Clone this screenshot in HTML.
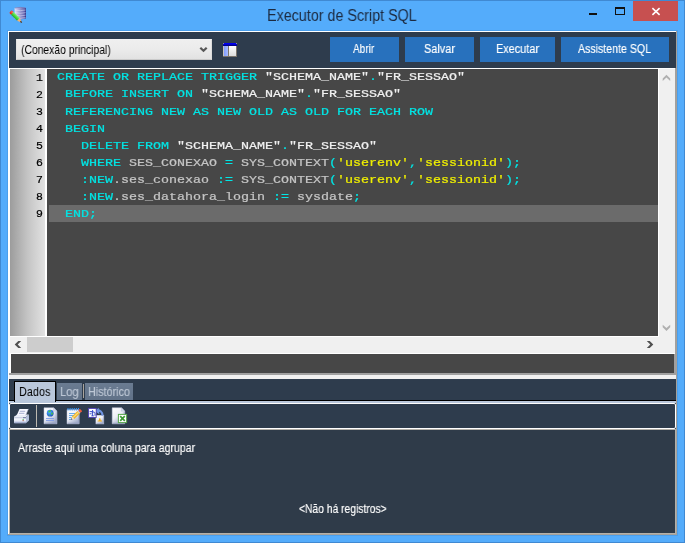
<!DOCTYPE html>
<html lang="pt-BR"><head><meta charset="utf-8"><title>Executor de Script SQL</title>
<style>
*{box-sizing:border-box;margin:0;padding:0}
html,body{width:685px;height:543px;overflow:hidden;background:#54acfb}
body{position:relative;font-family:"Liberation Sans",sans-serif}
.abs,.win div,.win span.a{position:absolute}
.win{position:absolute;left:0;top:0;width:685px;height:543px;background:#54acfb;overflow:hidden}
.edge{border:1px solid #4089d2;left:0;top:0;width:685px;height:543px}
.title{left:0;top:4px;width:685px;height:22px;line-height:22px;text-align:center;font-size:14.6px;color:#0b1626;white-space:nowrap;letter-spacing:-0.1px}
.t{white-space:nowrap;line-height:1;transform-origin:0 0;will-change:transform}
.client{left:8px;top:31px;width:669px;height:504px;background:#2e3c4d}
.combo{left:16px;top:39px;width:196px;height:21px;background:linear-gradient(#efefef,#ebebeb 50%,#e2e2e2);border:1px solid #e4e4e4;border-top-color:#f4f4f4;border-bottom-color:#cacaca;border-right-color:#dcdcdc}
.btn{top:37px;height:25px;background:#2871bd}
.ed{left:9px;top:68px;width:667px;height:306px;background:#fff}
.gut{will-change:transform;left:10px;top:69px;width:35px;height:267px;background:linear-gradient(90deg,#9c9c9c,#c4c4c4 50%,#e2e2e2)}
.code{left:47px;top:69px;width:611px;height:267px;background:#474747;overflow:hidden;will-change:transform}
.hl{left:2px;top:136px;width:609px;height:17px;background:#6b6b6b}
.ln{left:10px;height:17px;line-height:17px;white-space:pre;font-family:"Liberation Mono",monospace;font-weight:normal;font-size:13.333px;-webkit-text-stroke:0.24px currentColor;transform:translateY(-0.5px) scaleY(0.87);transform-origin:0 12px}
.num{left:1px;width:32px;height:17px;line-height:17px;text-align:right;font-family:"Liberation Mono",monospace;font-weight:normal;font-size:11.5px;color:#000;-webkit-text-stroke:0.2px #000}
.k{color:#00e6e6} .i{color:#c6c6c6} .q{color:#f2f2f2} .s{color:#f0f000} .y{color:#00e6e6}
</style></head><body>
<div class="win">
<div class="edge"></div>
<!-- window buttons -->
<div style="left:589px;top:13px;width:8px;height:2px;background:#111"></div>
<div style="left:615px;top:7px;width:10px;height:8px;border:1px solid #111;border-top-width:2px"></div>
<div style="left:633px;top:1px;width:45px;height:20px;background:#c75050"></div>
<svg class="abs" style="left:650px;top:6px" width="12" height="10" viewBox="0 0 12 10"><path d="M2.4 2.1 L9.6 8.9 M9.6 2.1 L2.4 8.9" stroke="#fff" stroke-width="1.6" fill="none"/></svg>

<div style="left:7px;top:30px;width:671px;height:506px;background:#4b9fec"></div>
<div class="client"></div>
<div style="left:8px;top:31px;width:669px;height:1px;background:#fff"></div>
<div style="left:8px;top:31px;width:1px;height:504px;background:#fff"></div>
<div style="left:676px;top:31px;width:1px;height:504px;background:#a4a09a"></div>
<div style="left:8px;top:534px;width:669px;height:1px;background:#a4a09a"></div>

<!-- top toolbar -->
<div class="combo"></div>
<svg class="abs" style="left:199px;top:46px" width="9" height="8" viewBox="0 0 9 8"><path d="M1.3 1.7 L4.5 4.8 L7.7 1.7" stroke="#585858" stroke-width="2.2" fill="none"/></svg>
<div class="btn" style="left:330px;width:69px"></div>
<div class="btn" style="left:405px;width:69px"></div>
<div class="btn" style="left:480px;width:75px"></div>
<div class="btn" style="left:561px;width:108px"></div>

<!-- editor -->
<div class="ed"></div>
<div style="left:8px;top:68px;width:3px;height:305px;background:#fff"></div>
<div class="gut"><div class="num" style="top:0px">1</div>
<div class="num" style="top:17px">2</div>
<div class="num" style="top:34px">3</div>
<div class="num" style="top:51px">4</div>
<div class="num" style="top:68px">5</div>
<div class="num" style="top:85px">6</div>
<div class="num" style="top:102px">7</div>
<div class="num" style="top:119px">8</div>
<div class="num" style="top:136px">9</div></div>
<div class="code"><div class="hl"></div>
<div class="ln" style="top:0px"><span class="k">CREATE OR REPLACE TRIGGER </span><span class="q">"SCHEMA_NAME"</span><span class="y">.</span><span class="q">"FR_SESSAO"</span></div>
<div class="ln" style="top:17px"><span class="k"> BEFORE INSERT ON </span><span class="q">"SCHEMA_NAME"</span><span class="y">.</span><span class="q">"FR_SESSAO"</span></div>
<div class="ln" style="top:34px"><span class="k"> REFERENCING NEW AS NEW OLD AS OLD FOR EACH ROW</span></div>
<div class="ln" style="top:51px"><span class="k"> BEGIN</span></div>
<div class="ln" style="top:68px"><span class="k">   DELETE FROM </span><span class="q">"SCHEMA_NAME"</span><span class="y">.</span><span class="q">"FR_SESSAO"</span></div>
<div class="ln" style="top:85px"><span class="k">   WHERE </span><span class="i">SES_CONEXAO </span><span class="y">= </span><span class="i">SYS_CONTEXT</span><span class="y">(</span><span class="s">'userenv'</span><span class="y">,</span><span class="s">'sessionid'</span><span class="y">);</span></div>
<div class="ln" style="top:102px"><span class="y">   :</span><span class="k">NEW</span><span class="i">.ses_conexao </span><span class="y">:= </span><span class="i">SYS_CONTEXT</span><span class="y">(</span><span class="s">'userenv'</span><span class="y">,</span><span class="s">'sessionid'</span><span class="y">);</span></div>
<div class="ln" style="top:119px"><span class="y">   :</span><span class="k">NEW</span><span class="i">.ses_datahora_login </span><span class="y">:= </span><span class="i">sysdate</span><span class="y">;</span></div>
<div class="ln" style="top:136px"><span class="k"> END</span><span class="y">;</span></div>
</div>
<!-- scrollbars -->
<div style="left:659px;top:69px;width:16px;height:284px;background:#f0f0f0"></div>
<div style="left:10px;top:337px;width:665px;height:16px;background:#f0f0f0"></div>
<div style="left:27px;top:337px;width:46px;height:15px;background:#cdcdcd"></div>
<div style="left:11px;top:354px;width:663px;height:19px;background:#474747"></div>
<div style="left:674px;top:354px;width:2px;height:19px;background:#a0a0a0"></div>
<div style="left:675px;top:68px;width:1px;height:306px;background:#a0a0a0"></div>
<div style="left:9px;top:373px;width:667px;height:2px;background:#a0a0a0"></div>
<div style="left:9px;top:375px;width:667px;height:4px;background:#f0f0f0"></div>
<svg class="abs" style="left:659px;top:69px" width="16" height="284" viewBox="0 0 16 284">
 <polygon points="7.45,5.8 11.2,9.5 11.2,12 7.45,8.6 3.7,12 3.7,9.5" fill="#b0b0b0"/>
 <polygon points="7.45,261.9 11.2,258.2 11.2,255.7 7.45,259.1 3.7,255.7 3.7,258.2" fill="#b0b0b0"/>
</svg>
<svg class="abs" style="left:10px;top:337px" width="665" height="16" viewBox="0 0 665 16">
 <polygon points="4.7,7.5 8.3,3.9 11.2,3.9 7.7,7.5 11.2,11.1 8.3,11.1" fill="#505050"/>
 <polygon points="643.3,7.5 639.7,3.9 636.8,3.9 640.3,7.5 636.8,11.1 639.7,11.1" fill="#505050"/>
</svg>

<!-- tabs -->
<div style="left:9px;top:379px;width:667px;height:21px;background:#2e3c4d"></div>
<div style="left:9px;top:400px;width:667px;height:1px;background:#000"></div>
<div style="left:9px;top:401px;width:667px;height:2px;background:#b9c7db"></div>
<div style="left:14px;top:381px;width:42px;height:21px;background:#b9c7db;border:1px solid #000;border-bottom:0"></div>
<div style="left:57px;top:383px;width:25px;height:17px;background:linear-gradient(#6a7b91,#617288)"></div>
<div style="left:83px;top:384px;width:1px;height:14px;background:#aaa49c"></div>
<div style="left:85px;top:383px;width:48px;height:17px;background:linear-gradient(#6a7b91,#617288)"></div>

<!-- toolbar 2 -->
<div style="left:9px;top:403px;width:667px;height:26px;border:1px solid #fff;border-radius:2px;background:#2e3c4d"></div>
<div style="left:36px;top:405px;width:1px;height:22px;background:#bdb9b1"></div>

<!-- grid -->
<div style="left:9px;top:429px;width:667px;height:105px;background:#2f3b49"></div>
<div style="left:9px;top:429px;width:667px;height:105px;border:1px solid #b4b0a8"></div>

<!-- TEXTS -->
<div class="t" style="left:267.30px;top:6.46px;font-size:16px;line-height:19px;color:#1c2a40;transform:scaleX(0.8954)">Executor de Script SQL</div>
<div class="t" style="left:20.60px;top:43.17px;font-size:12.5px;line-height:15px;color:#000;transform:scaleX(0.8276)">(Conexão principal)</div>
<div class="t" style="left:352.90px;top:42.17px;font-size:12.5px;line-height:15px;color:#fff;-webkit-text-stroke:0.15px #fff;transform:scaleX(0.8028)">Abrir</div>
<div class="t" style="left:424.00px;top:42.17px;font-size:12.5px;line-height:15px;color:#fff;-webkit-text-stroke:0.15px #fff;transform:scaleX(0.8748)">Salvar</div>
<div class="t" style="left:496.00px;top:42.17px;font-size:12.5px;line-height:15px;color:#fff;-webkit-text-stroke:0.15px #fff;transform:scaleX(0.8714)">Executar</div>
<div class="t" style="left:578.00px;top:42.17px;font-size:12.5px;line-height:15px;color:#fff;-webkit-text-stroke:0.15px #fff;transform:scaleX(0.8473)">Assistente SQL</div>
<div class="t" style="left:18.60px;top:385.17px;font-size:12.5px;line-height:15px;color:#000;transform:scaleX(0.8688)">Dados</div>
<div class="t" style="left:59.80px;top:385.17px;font-size:12.5px;line-height:15px;color:#bcc6d4;-webkit-text-stroke:0.15px #bcc6d4;transform:scaleX(0.8869)">Log</div>
<div class="t" style="left:87.60px;top:385.17px;font-size:12.5px;line-height:15px;color:#bcc6d4;-webkit-text-stroke:0.15px #bcc6d4;transform:scaleX(0.8617)">Histórico</div>
<div class="t" style="left:18.00px;top:441.17px;font-size:12.5px;line-height:15px;color:#fff;-webkit-text-stroke:0.15px #fff;transform:scaleX(0.8407)">Arraste aqui uma coluna para agrupar</div>
<div class="t" style="left:298.80px;top:502.17px;font-size:12.5px;line-height:15px;color:#fff;-webkit-text-stroke:0.15px #fff;transform:scaleX(0.8240)">&lt;Não há registros&gt;</div>
<!-- title icon: database + pencil -->
<svg class="abs" style="left:8px;top:5px" width="20" height="20" viewBox="0 0 20 20">
 <defs>
  <linearGradient id="gdb" x1="0" x2="1" y1="0" y2="0"><stop offset="0" stop-color="#e0e0f8"/><stop offset="0.3" stop-color="#b0b0e0"/><stop offset="0.75" stop-color="#7474b8"/><stop offset="0.93" stop-color="#5050a0"/><stop offset="1" stop-color="#1c1c6c"/></linearGradient>
  <linearGradient id="gpn" x1="0" x2="0" y1="0" y2="1"><stop offset="0" stop-color="#8cf47c"/><stop offset="0.5" stop-color="#48d840"/><stop offset="1" stop-color="#28a828"/></linearGradient>
 </defs>
 <path d="M6.6 2.9 Q12.3 1.5 18 2.9 V13.6 Q12.3 15.2 6.6 13.6 Z" fill="url(#gdb)"/>
 <path d="M6.9 3 Q12.3 1.7 17.7 3" stroke="#7878b8" stroke-width="0.7" fill="none"/>
 <path d="M7 5 Q12.3 6.4 17.6 5 M7 7.6 Q12.3 9 17.6 7.6 M7 10.2 Q12.3 11.6 17.6 10.2 M7 12.6 Q12.3 14 17.6 12.6" stroke="#e8e8ff" stroke-width="0.7" fill="none" opacity="0.7"/>
 <g transform="translate(3.5 7.6) rotate(44.5)">
  <rect x="-1.5" y="-1.9" width="3" height="3.8" rx="1.2" fill="#e83820"/>
  <rect x="-0.8" y="-1.5" width="1.6" height="1.3" rx="0.6" fill="#f8a090"/>
  <rect x="1.2" y="-1.9" width="8.6" height="3.8" fill="url(#gpn)"/>
  <path d="M9.8 -1.9 L14.6 0 L9.8 1.9 Z" fill="#f6b070"/>
  <path d="M12.6 -0.9 L14.9 0 L12.6 0.9 Z" fill="#2a2018"/>
 </g>
</svg>
<!-- table icon -->
<svg class="abs" style="left:223px;top:43px" width="14" height="14" viewBox="0 0 14 14" shape-rendering="crispEdges">
 <defs>
  <linearGradient id="gtb" x1="0" x2="1"><stop offset="0" stop-color="#7f9bff"/><stop offset="1" stop-color="#a9bcff"/></linearGradient>
  <linearGradient id="gtw" x1="0" x2="0" y1="0" y2="1"><stop offset="0" stop-color="#ffffff"/><stop offset="1" stop-color="#dcdcdc"/></linearGradient>
 </defs>
 <rect x="0" y="0" width="14" height="14" fill="#7a746c"/>
 <rect x="0" y="0" width="14" height="1" fill="#0000f0"/>
 <rect x="0" y="1" width="14" height="1" fill="#0000d0"/>
 <rect x="0" y="2" width="14" height="1" fill="#00008c"/>
 <rect x="0" y="0" width="1" height="1" fill="#8c8c9c"/><rect x="13" y="0" width="1" height="1" fill="#8c8c9c"/>
 <rect x="1" y="3" width="4" height="10" fill="url(#gtb)"/>
 <rect x="6" y="3" width="7" height="10" fill="url(#gtw)"/>
 <rect x="0" y="3" width="1" height="10" fill="#c8c4bc"/>
</svg>
<!-- printer -->
<svg class="abs" style="left:13px;top:407px" width="18" height="18" viewBox="0 0 18 18">
 <defs>
  <linearGradient id="gpr" x1="0" x2="0" y1="0" y2="1"><stop offset="0" stop-color="#ffffff"/><stop offset="0.55" stop-color="#eef1fa"/><stop offset="1" stop-color="#aab6d6"/></linearGradient>
 </defs>
 <path d="M1 10 L4 7.5 H16 L13 10 Z" fill="#dfe4f2"/>
 <path d="M13 10 L16 7.5 V13.4 L13 16.2 Z" fill="#b4c0dc"/>
 <path d="M6.5 1.9 H15.3 L12.5 8.6 H3.7 Z" fill="#f8f8ff"/>
 <path d="M6.8 4.3 H12.2 M6 6.3 H11.4" stroke="#9ea6cc" stroke-width="0.9"/>
 <path d="M12.5 8.6 L15.3 1.9" stroke="#c8cce4" stroke-width="0.6"/>
 <rect x="1" y="9.6" width="12" height="6.6" fill="url(#gpr)"/>
 <rect x="1" y="10.4" width="12" height="0.8" fill="#a8b2d0"/>
 <rect x="10" y="10.3" width="3" height="0.9" fill="#5c6890"/>
 <rect x="9.6" y="12.2" width="1.1" height="1" fill="#30a838"/>
 <rect x="9.6" y="13.2" width="1.1" height="0.9" fill="#a84830"/>
 <rect x="1.6" y="15.6" width="11.4" height="0.7" fill="#8894b8"/>
</svg>
<!-- doc with globe -->
<svg class="abs" style="left:43px;top:407px" width="16" height="18" viewBox="0 0 16 18">
 <defs>
  <linearGradient id="gpg" x1="0" x2="0.6" y1="0" y2="1"><stop offset="0" stop-color="#ffffff"/><stop offset="0.55" stop-color="#eceef6"/><stop offset="1" stop-color="#a4aeca"/></linearGradient>
  <radialGradient id="ggl" cx="0.4" cy="0.35" r="0.7"><stop offset="0" stop-color="#58b8ff"/><stop offset="0.6" stop-color="#2a78e0"/><stop offset="1" stop-color="#1c4cb0"/></radialGradient>
 </defs>
 <path d="M1 0.8 H10.6 L14 4.2 V16.8 H1 Z" fill="url(#gpg)" stroke="#c3c9e0" stroke-width="0.5"/>
 <path d="M10.6 0.8 V4.2 H14 Z" fill="#d8dcec" stroke="#aab2d0" stroke-width="0.4"/>
 <path d="M13.2 5 V16.2 H2 " stroke="#8e98bc" stroke-width="0.8" fill="none" opacity="0.7"/>
 <circle cx="7.2" cy="6.2" r="3.4" fill="url(#ggl)"/>
 <path d="M5.2 4.6 Q6.6 3 8.2 3.4 Q7.6 5 6.4 5.4 Q5.6 6.2 5.2 4.6 Z M8.4 5.6 Q9.8 5.4 10 6.8 Q9.2 8.4 8.2 7.4 Z M5.6 7.4 Q6.6 7.2 6.8 8.6 Q6 8.8 5.6 7.4 Z" fill="#4fc83c"/>
 <path d="M3 11.5 H11 M3 13.5 H11" stroke="#7f9be6" stroke-width="0.9"/>
</svg>
<!-- notepad with pencil -->
<svg class="abs" style="left:66px;top:407px" width="17" height="18" viewBox="0 0 17 18">
 <path d="M1 2.6 H13.2 V16.8 H1 Z" fill="url(#gpg)" stroke="#c3c9e0" stroke-width="0.5"/>
 <path d="M12.6 4 V16.2 H1.6" stroke="#8e98bc" stroke-width="0.8" fill="none" opacity="0.7"/>
 <path d="M2 1 V3.6 M4.1 1 V3.6 M6.2 1 V3.6 M8.3 1 V3.6 M10.4 1 V3.6 M12.5 1 V3.6" stroke="#3c94ee" stroke-width="1.05"/>
 <path d="M3 6.5 H9 M3 8.5 H8 M3 10.5 H6 M3 12.5 H5" stroke="#58a4ea" stroke-width="0.9"/>
 <g transform="translate(5.2 12.5) rotate(-44)">
  <path d="M0 0 L2.6 -1.7 V1.7 Z" fill="#f4e8d0"/>
  <path d="M-0.3 0 L1.1 -0.8 V0.8 Z" fill="#202020"/>
  <rect x="2.6" y="-1.7" width="7.8" height="3.4" fill="#eeb028"/>
  <rect x="2.6" y="-0.6" width="7.8" height="1.1" fill="#fbe27a"/>
  <rect x="10.4" y="-1.7" width="1" height="3.4" fill="#c8c8d0"/>
  <rect x="11.4" y="-1.8" width="2.4" height="3.6" rx="1.1" fill="#f05a3c"/>
 </g>
</svg>
<!-- box + arrow + page -->
<svg class="abs" style="left:87px;top:407px" width="18" height="18" viewBox="0 0 18 18">
 <rect x="8.9" y="8.2" width="8" height="8.8" fill="url(#gpg)" stroke="#c3c9e0" stroke-width="0.4"/>
 <path d="M16.4 9 V16.5 H9.5" stroke="#8e98bc" stroke-width="0.7" fill="none" opacity="0.7"/>
 <path d="M10.6 14.6 H15 V13.4 H13.8 Q13.8 11.2 12.8 11 Q11.8 11.2 11.8 13.4 H10.6 Z" fill="#f0b020"/>
 <path d="M9.5 3.5 Q15.2 3 15.6 8.6" stroke="#6f95e4" stroke-width="2.2" fill="none"/>
 <path d="M8 4.2 L11.6 0.8 L12.4 7.2 Z" fill="#6f95e4"/>
 <rect x="1.6" y="1.4" width="7.6" height="9" fill="#ffffff" stroke="#4a3cb4" stroke-width="0.9"/>
 <path d="M2.6 4.6 H5 M2.6 6.8 H4.6 M5.6 3 V8.8 M4.6 5 H7 Q8 5.2 8 6.6 V8.8 M4.4 8.8 H6.8" stroke="#2a40c4" stroke-width="0.9" fill="none"/>
</svg>
<!-- page + excel -->
<svg class="abs" style="left:111px;top:407px" width="18" height="18" viewBox="0 0 18 18">
 <path d="M1.2 0.8 H10.4 L13.8 4.2 V16.8 H1.2 Z" fill="url(#gpg)" stroke="#c3c9e0" stroke-width="0.5"/>
 <path d="M10.4 0.8 V4.2 H13.8 Z" fill="#d8dcec" stroke="#aab2d0" stroke-width="0.4"/>
 <path d="M13.1 5 V16.2 H2" stroke="#8e98bc" stroke-width="0.8" fill="none" opacity="0.7"/>
 <rect x="7.4" y="7.4" width="8.2" height="8.2" fill="#ffffff" stroke="#58a84c" stroke-width="1"/>
 <path d="M9.2 9.2 L13.8 13.8 M13.8 9.2 L9.2 13.8" stroke="#3e9a36" stroke-width="1.7"/>
 <path d="M12.6 11.5 L14.4 10.4 V12.6 Z" fill="#ffffff"/>
</svg>

</div>
</body></html>
